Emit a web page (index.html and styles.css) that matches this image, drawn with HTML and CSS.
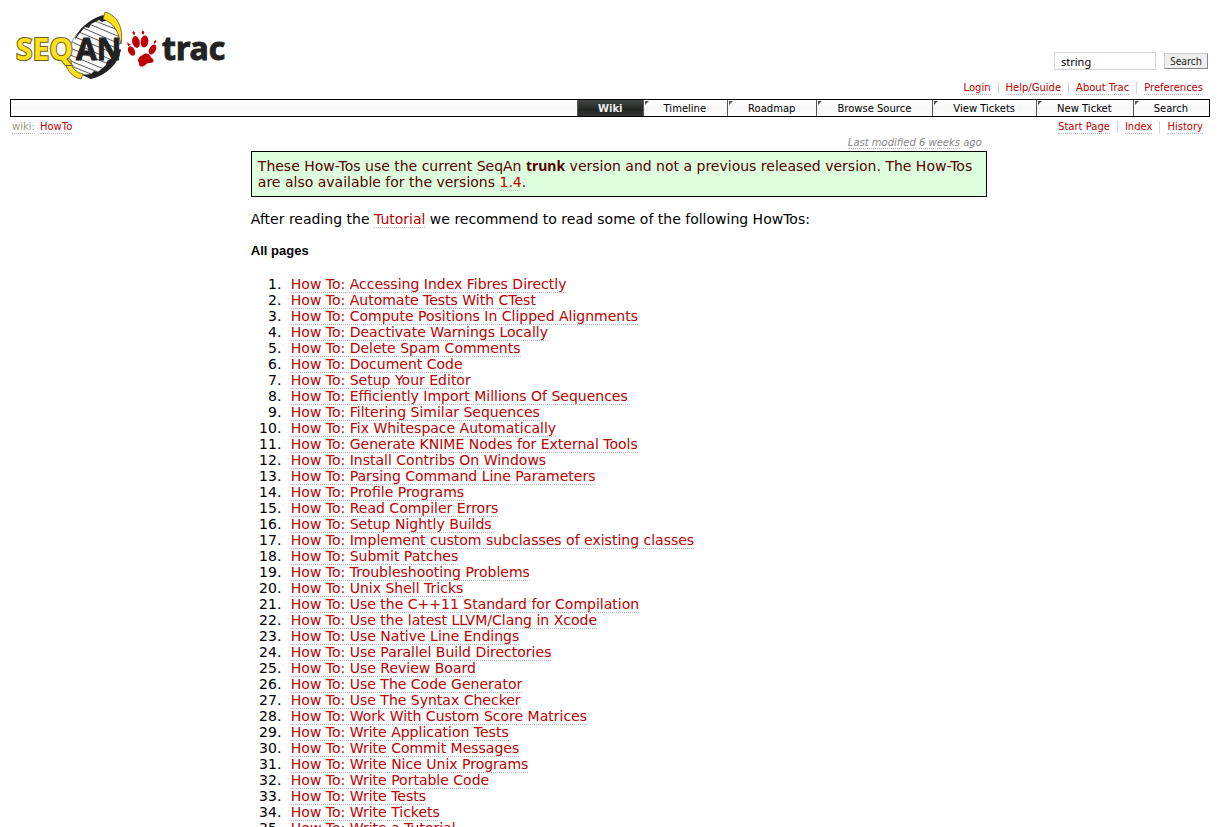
FILE: index.html
```html
<!DOCTYPE html>
<html lang="en">
<head>
<meta charset="utf-8">
<title>HowTo – SeqAn</title>
<link rel="stylesheet" href="styles.css">
</head>
<body>
<header class="banner">
  <a class="logo" href="#" aria-label="SeqAn trac">
    <svg width="216" height="76" viewBox="10 6 216 76">
      <path d="M67 58C68 46 74 34 88 24L104 17L117 26C122 40 119 54 108 66L92 76L80 74C71 71 66 66 67 58Z" fill="#fff" stroke="#777" stroke-width="0.8"/>
      <path d="M95 21l23 9M89 24l31 13M83 28l37 16M79 32l42 18M75 37l45 19M72 42l44 20M70 48l41 17M68 54l36 15M68 60l30 12M71 66l20 8" fill="none" stroke="#444" stroke-width="0.9"/>
      <path d="M75 40C77 30 88 20 103 15L108 20L102 22L99 20L91 24L89 28L85 27L79 34Z" fill="#222"/>
      <path d="M82 75L91 74L94 71L98 72L106 65L107 61L112 58L114 50L121 50C118 64 107 75 91 79Z" fill="#222"/>
      <path d="M105 12C117 15 124 28 121 44L118 34C115 26 110 22 103 19Z" fill="#ffe01b" stroke="#555030" stroke-width="0.8"/>
      <path d="M65 56C64 68 71 77 81 79L83 74C75 72 71 67 71 60Z" fill="#ffe01b" stroke="#555030" stroke-width="0.8"/>
      <text class="logo-seq" x="16" y="60">SEQ</text>
      <text class="logo-an" x="76" y="60">AN</text>
      <g fill="#c00000">
        <ellipse cx="131.500" cy="51" rx="3.200" ry="5" transform="rotate(-28 131.500 51)"/>
        <ellipse cx="136" cy="42" rx="3.700" ry="6" transform="rotate(-15 136 42)"/>
        <ellipse cx="144.500" cy="41.500" rx="3.800" ry="6" transform="rotate(6 144.500 41.500)"/>
        <ellipse cx="152.500" cy="49.500" rx="3.200" ry="5.500" transform="rotate(28 152.500 49.500)"/>
        <path d="M144 54C149 52 150 57 153 59C155 63 151 63 149 63C146 63 145 67 141 66.500C138 66 140 63 138 61C138 57 141 56 144 54Z"/>
        <path d="M127 42l4 3-3 1zM133 31q3 1 1.500 4q-3-1-1.500-4zM142.500 30.500q3 1 1 4q-3-1-1-4zM156 40q1 2-2 4q-1-3 2-4z"/>
      </g>
      <text class="logo-trac" x="162" y="60">trac</text>
    </svg>
  </a>
  <div class="tools">
    <form class="search">
      <input class="search-box" type="text" value="string" aria-label="Search text">
      <button class="search-button" type="button">Search</button>
    </form>
    <nav class="links">
      <a href="#">Login</a><a href="#">Help/Guide</a><a href="#">About Trac</a><a href="#">Preferences</a>
    </nav>
  </div>
</header>
<nav class="mainnav">
  <a class="active" href="#">Wiki</a><a href="#">Timeline</a><a href="#">Roadmap</a><a href="#">Browse Source</a><a href="#">View Tickets</a><a href="#">New Ticket</a><a href="#">Search</a>
</nav>
<div class="context">
  <div class="path"><a class="muted" href="#">wiki:</a><a href="#">HowTo</a></div>
  <nav class="links"><a href="#">Start Page</a><a href="#">Index</a><a href="#">History</a></nav>
</div>
<main class="content">
  <div class="modified"><a href="#">Last modified</a> <a href="#">6 weeks</a> ago</div>
  <p class="notice">These How-Tos use the current SeqAn <strong>trunk</strong> version and not a previous released version. The How-Tos are also available for the versions <a href="#">1.4</a>.</p>
  <p class="intro">After reading the <a href="#">Tutorial</a> we recommend to read some of the following HowTos:</p>
  <h4 class="heading">All pages</h4>
  <ol class="pages">
    <li><a href="#">How To: Accessing Index Fibres Directly</a></li>
    <li><a href="#">How To: Automate Tests With CTest</a></li>
    <li><a href="#">How To: Compute Positions In Clipped Alignments</a></li>
    <li><a href="#">How To: Deactivate Warnings Locally</a></li>
    <li><a href="#">How To: Delete Spam Comments</a></li>
    <li><a href="#">How To: Document Code</a></li>
    <li><a href="#">How To: Setup Your Editor</a></li>
    <li><a href="#">How To: Efficiently Import Millions Of Sequences</a></li>
    <li><a href="#">How To: Filtering Similar Sequences</a></li>
    <li><a href="#">How To: Fix Whitespace Automatically</a></li>
    <li><a href="#">How To: Generate KNIME Nodes for External Tools</a></li>
    <li><a href="#">How To: Install Contribs On Windows</a></li>
    <li><a href="#">How To: Parsing Command Line Parameters</a></li>
    <li><a href="#">How To: Profile Programs</a></li>
    <li><a href="#">How To: Read Compiler Errors</a></li>
    <li><a href="#">How To: Setup Nightly Builds</a></li>
    <li><a href="#">How To: Implement custom subclasses of existing classes</a></li>
    <li><a href="#">How To: Submit Patches</a></li>
    <li><a href="#">How To: Troubleshooting Problems</a></li>
    <li><a href="#">How To: Unix Shell Tricks</a></li>
    <li><a href="#">How To: Use the C++11 Standard for Compilation</a></li>
    <li><a href="#">How To: Use the latest LLVM/Clang in Xcode</a></li>
    <li><a href="#">How To: Use Native Line Endings</a></li>
    <li><a href="#">How To: Use Parallel Build Directories</a></li>
    <li><a href="#">How To: Use Review Board</a></li>
    <li><a href="#">How To: Use The Code Generator</a></li>
    <li><a href="#">How To: Use The Syntax Checker</a></li>
    <li><a href="#">How To: Work With Custom Score Matrices</a></li>
    <li><a href="#">How To: Write Application Tests</a></li>
    <li><a href="#">How To: Write Commit Messages</a></li>
    <li><a href="#">How To: Write Nice Unix Programs</a></li>
    <li><a href="#">How To: Write Portable Code</a></li>
    <li><a href="#">How To: Write Tests</a></li>
    <li><a href="#">How To: Write Tickets</a></li>
    <li><a href="#">How To: Write a Tutorial</a></li>
  </ol>
</main>
</body>
</html>
```
FILE: styles.css
```css
* { box-sizing: border-box; }
body {
  margin: 0;
  padding: 6px 10px 0;
  height: 100vh;
  overflow: hidden;
  background: #fff;
  color: #000;
  font: 14px/16px Verdana, "DejaVu Sans", sans-serif;
}
a { color: #b00; text-decoration: none; border-bottom: 1px dotted #bbb; }
.banner { display: flex; justify-content: space-between; align-items: flex-end; height: 93px; }
.logo { border: 0; align-self: flex-start; }
.logo svg { display: block; }
.logo-seq, .logo-an { font: bold 30px "Open Sans", sans-serif; }
.logo-seq { fill: #ffe01b; stroke: #665f20; stroke-width: 2px; paint-order: stroke; }
.logo-an { fill: #222; stroke: #222; stroke-width: 1px; }
.logo-trac { font: bold 32px "Noto Sans", sans-serif; fill: #222; stroke: #222; stroke-width: 1px; }
.tools { display: flex; flex-direction: column; align-items: flex-end; gap: 12px; padding-bottom: 4px; }
.search { display: flex; gap: 8px; align-items: center; padding-right: 2px; }
.search-box { width: 102px; height: 18px; padding: 0 6px; border: 1px solid #d7d7d7; font: 11px "Noto Sans", sans-serif; color: #000; }
.search-button { width: 44px; height: 16px; padding: 0; border: 1px solid #ccc; border-right-color: #888; border-bottom-color: #888; background: #eee; font: 10px/13px "Noto Sans", sans-serif; color: #222; }
.links { display: flex; font-size: 10px; line-height: 12px; padding-right: 7px; }
.links a { margin-left: 15px; position: relative; }
.links a + a::before { content: ""; position: absolute; left: -8px; top: 0; height: 12px; border-left: 1px solid #d7d7d7; }
.mainnav { display: flex; justify-content: flex-end; height: 18px; border: 1px solid #000; background: linear-gradient(#fff, #f7f7f7 50%, #fff); font-size: 10px; line-height: 17px; }
.mainnav a { position: relative; padding: 0 21px 0 20px; border: 0; border-left: 1px solid #555; color: #000; }
.mainnav a:not(.active)::before { content: ""; position: absolute; left: 1px; top: 1px; border-top: 4px solid #555; border-right: 4px solid transparent; }
.mainnav .active { padding: 0 20px; background: linear-gradient(#444844, #222522 60%, #333633); color: #eee; font-weight: bold; }
.context { display: flex; justify-content: space-between; padding: 4px 0 0 2px; font-size: 10px; line-height: 12px; }
.path { display: flex; align-items: flex-start; gap: 5px; }
.muted { color: #998; }
.content { width: 61.333%; min-width: 480px; margin: 0 18.6% 0 auto; }
.modified { padding: 3px 5px 2px 0; text-align: right; font-size: 10px; line-height: 12px; font-style: italic; color: #888; }
.modified a { color: #888; }
.notice { margin: 0; padding: 6px; border: 1px solid #000; background: #dfd; color: #500; }
.notice strong { font-family: "Noto Sans", sans-serif; line-height: 1; }
.intro { margin: 14px 0 16px; }
.heading { margin: 0 0 17px; font: bold 13px/16px "Liberation Sans", Arial, sans-serif; }
.pages { margin: 0; padding: 0 0 0 35px; }
.pages li { padding-left: 5px; }
```
